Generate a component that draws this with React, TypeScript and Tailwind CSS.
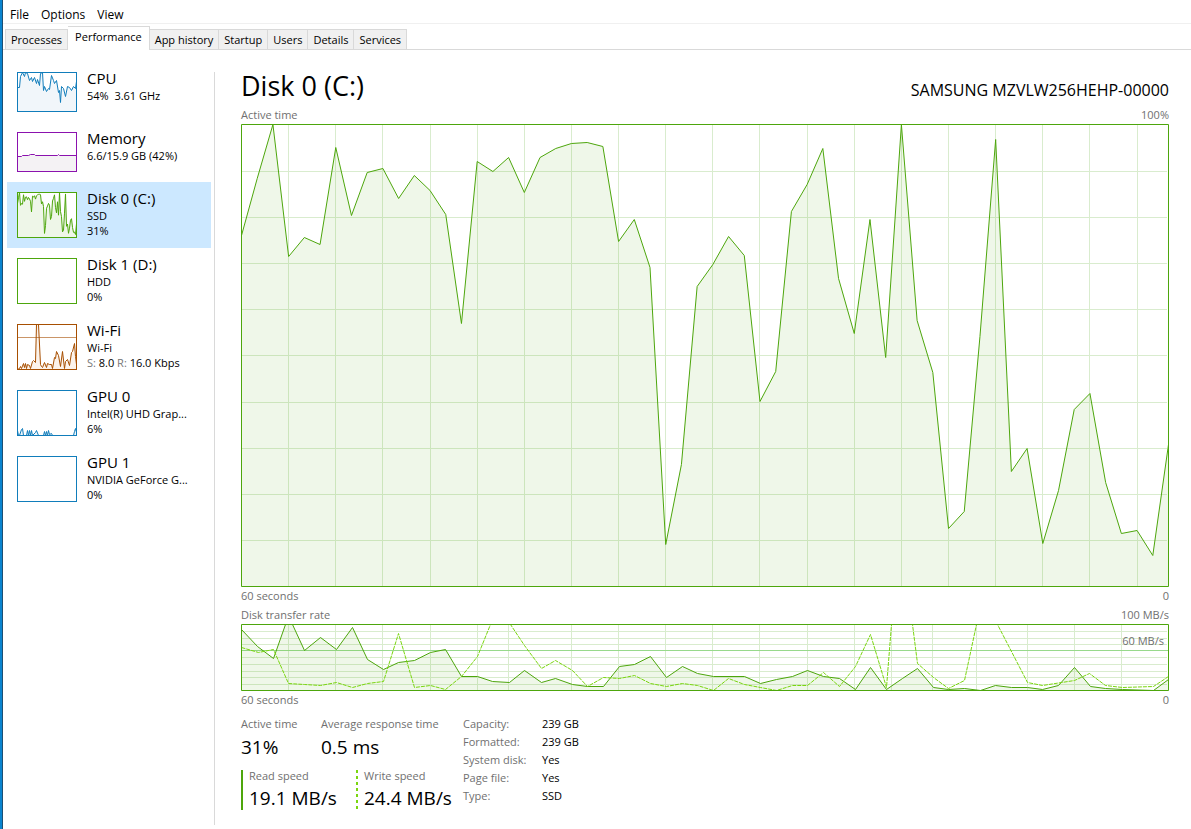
type Pt = [number, number];

const BLUE = "#117dbb";
const PURPLE = "#8b12ae";
const GREEN = "#4da60c";
const BROWN = "#a74f01";

// Active time, 60 samples, y in chart pixels from the top (462 = 0%)
const activeY = [
  111, 54, 0, 132, 113, 120, 23, 91, 48, 44, 74, 51, 66, 90, 199, 37, 47, 33, 68, 33,
  24, 19, 18, 22, 117, 95, 143, 420, 340, 162, 140, 112, 131, 277, 247, 87, 60, 24, 154, 209,
  95, 233, 0, 196, 248, 404, 387, 212, 15, 347, 324, 419, 366, 285, 269, 358, 409, 406, 431, 320,
];
const active: Pt[] = activeY.map((y, i) => [(i * 927) / 59, y]);
const disk0: Pt[] = activeY.map((y, i) => [i, (y * 45) / 462]);

const read: Pt[] = [
  [0, 5], [16, 22], [32, 34], [44, 0], [51, 0], [63, 26], [79, 13], [95, 25], [111, 3], [126, 35],
  [142, 45], [157, 38], [173, 36], [189, 28], [204, 25], [220, 52], [236, 52], [251, 57], [268, 58], [283, 46],
  [300, 58], [314, 54], [331, 60], [346, 62], [362, 62], [378, 42], [393, 40], [409, 32], [425, 53], [441, 42],
  [456, 49], [472, 52], [503, 52], [519, 59], [535, 55], [551, 52], [566, 46], [582, 52], [598, 54], [614, 65],
  [629, 43], [645, 65], [661, 54], [676, 44], [692, 63], [707, 65], [723, 64], [739, 66], [754, 61], [770, 63],
  [786, 63], [801, 65], [817, 61], [833, 43], [849, 62], [864, 64], [881, 65], [912, 66], [927, 55],
];

const write: Pt[] = [
  [0, 23], [17, 28], [32, 25], [47, 59], [63, 60], [79, 61], [95, 58], [111, 63], [126, 59], [142, 57],
  [157, 9], [173, 63], [189, 61], [204, 65], [220, 52], [236, 32], [249, 0], [269, 0], [283, 21], [300, 44],
  [314, 36], [331, 46], [346, 62], [362, 53], [378, 54], [393, 51], [409, 59], [425, 62], [441, 59], [456, 61],
  [472, 66], [487, 54], [503, 60], [519, 63], [535, 66], [551, 61], [566, 61], [582, 48], [598, 62], [614, 42],
  [629, 10], [645, 63], [650, 0], [671, 0], [676, 39], [692, 53], [707, 64], [723, 56], [735, 0], [756, 0],
  [786, 58], [801, 61], [833, 56], [848, 49], [864, 61], [881, 63], [912, 62], [927, 52],
];

const cpu: Pt[] = [
  [0, 15], [2, 15], [3, 4], [5, 0], [7, 4], [8, 0], [10, 1], [12, 8], [14, 5], [15, 9],
  [17, 5], [19, 11], [20, 7], [22, 13], [23, 1], [25, 0], [26, 18], [27, 14], [29, 19], [31, 16],
  [32, 17], [34, 3], [36, 8], [37, 11], [39, 8], [41, 20], [42, 18], [43, 30], [44, 14], [46, 16],
  [48, 24], [50, 14], [52, 15], [54, 18], [56, 14], [58, 16], [59, 9],
];

const memory: Pt[] = [[0, 24], [4, 24], [5, 23], [11, 23], [13, 22], [17, 22], [18, 23], [40, 23], [41, 22], [42, 23], [59, 23]];

const wifi: Pt[] = [
  [0, 45], [2, 44], [3, 42], [4, 44], [6, 39], [7, 43], [8, 39], [9, 44], [10, 40], [12, 41],
  [13, 44], [15, 37], [16, 36], [18, 38], [19, 0], [21, 0], [23, 40], [24, 42], [25, 43], [27, 38],
  [29, 43], [30, 39], [32, 40], [34, 40], [35, 44], [37, 33], [38, 34], [39, 27], [41, 31], [43, 42],
  [45, 27], [47, 44], [48, 37], [50, 35], [52, 41], [54, 28], [55, 27], [57, 19], [58, 32], [59, 40],
];

const gpu0: Pt[] = [
  [0, 40], [1, 45], [2, 45], [4, 39], [5, 38], [6, 45], [9, 45], [10, 40], [11, 45], [12, 40],
  [13, 45], [14, 40], [15, 45], [18, 42], [19, 40], [21, 45], [26, 45], [27, 41], [28, 45], [29, 41],
  [30, 45], [31, 40], [32, 44], [34, 43], [35, 45], [56, 45], [57, 41], [58, 38], [59, 42],
];

const toPoints = (pts: Pt[]) => pts.map(([x, y]) => `${x + 0.5},${y + 0.5}`).join(" ");

type ThumbProps = { color: string; fill?: string; height: number; data?: Pt[]; rule?: number };

function Thumb({ color, fill = "none", height, data, rule }: ThumbProps) {
  return (
    <svg width={60} height={height} className="shrink-0" aria-hidden="true">
      <rect x="0.5" y="0.5" width="59" height={height - 1} fill="#fff" />
      {data && (
        <>
          <polygon points={`0.5,${height} ${toPoints(data)} 59.5,${height}`} fill={fill} />
          <polyline points={toPoints(data)} fill="none" stroke={color} />
        </>
      )}
      {rule && <path d={`M0 ${rule + 0.5}H60`} stroke={color} strokeOpacity="0.6" />}
      <rect x="0.5" y="0.5" width="59" height={height - 1} fill="none" stroke={color} />
    </svg>
  );
}

type ChartProps = {
  label: string;
  height: number;
  columns: number[];
  data: Pt[];
  dashed?: Pt[];
  strongRow?: number;
  className: string;
};

function Chart({ label, height, columns, data, dashed, strongRow, className }: ChartProps) {
  // the strong row stands in for the grid row beside it
  const rows = Array.from({ length: 9 }, (_, i) => Math.ceil(((i + 1) * (height - 1)) / 10)).filter(
    (y) => !strongRow || Math.abs(y - strongRow) > 1,
  );
  return (
    <svg viewBox={`0 0 928 ${height}`} preserveAspectRatio="none" className={className} role="img" aria-label={label}>
      <g stroke="#d9ecce">
        {columns.map((x) => (
          <path key={x} d={`M${x + 0.5} 0V${height}`} vectorEffect="non-scaling-stroke" />
        ))}
        {rows.map((y) => (
          <path key={y} d={`M0 ${y + 0.5}H926`} vectorEffect="non-scaling-stroke" />
        ))}
      </g>
      {strongRow && <path d={`M0 ${strongRow + 0.5}H928`} stroke="#98d98c" vectorEffect="non-scaling-stroke" />}
      <polygon points={`0,${height} ${toPoints(data)} 928,${height}`} fill={GREEN} fillOpacity="0.09" />
      <polyline points={toPoints(data)} fill="none" stroke={GREEN} vectorEffect="non-scaling-stroke" />
      {dashed && (
        <polyline
          points={toPoints(dashed)}
          fill="none"
          stroke="#7ad610"
          strokeDasharray="4 1"
          vectorEffect="non-scaling-stroke"
        />
      )}
      <rect
        x="0.5"
        y="0.5"
        width="927"
        height={height - 1}
        fill="none"
        stroke={GREEN}
        vectorEffect="non-scaling-stroke"
      />
    </svg>
  );
}

const tabs = ["Processes", "Performance", "App history", "Startup", "Users", "Details", "Services"];

const devices = [
  { name: "CPU", lines: ["54%  3.61 GHz"], thumb: { color: BLUE, fill: "#f1f6fa", height: 40, data: cpu } },
  { name: "Memory", lines: ["6.6/15.9 GB (42%)"], thumb: { color: PURPLE, fill: "#f4f2f4", height: 40, data: memory } },
  { name: "Disk 0 (C:)", lines: ["SSD", "31%"], thumb: { color: GREEN, fill: "#eef6e8", height: 46, data: disk0 } },
  { name: "Disk 1 (D:)", lines: ["HDD", "0%"], thumb: { color: GREEN, height: 46 } },
  { name: "Wi-Fi", lines: ["Wi-Fi", "rate"], thumb: { color: BROWN, fill: "#fcf3eb", height: 46, data: wifi, rule: 13 } },
  { name: "GPU 0", lines: ["Intel(R) UHD Grap...", "6%"], thumb: { color: BLUE, fill: "#f1f6fa", height: 46, data: gpu0 } },
  { name: "GPU 1", lines: ["NVIDIA GeForce G...", "0%"], thumb: { color: BLUE, height: 46 } },
];

const details = [
  ["Capacity:", "239 GB"],
  ["Formatted:", "239 GB"],
  ["System disk:", "Yes"],
  ["Page file:", "Yes"],
  ["Type:", "SSD"],
];

const activeCols = [47, 94, 141, 189, 236, 283, 330, 377, 424, 471, 518, 566, 613, 660, 707, 754, 801, 848, 896];
const rateCols = [47, 94, 141, 189, 236, 267, 330, 377, 424, 471, 518, 566, 613, 650, 691, 735, 786, 833, 880];

export default function App() {
  return (
    <div className="flex min-h-screen flex-col border-l-2 border-[#0a84cf] bg-white font-['Open_Sans','Noto_Sans',sans-serif] text-[11px] text-black">
      <div className="flex flex-1 flex-col border-l border-[#1c4f73]">
        <nav className="flex h-6 items-center gap-3 border-b border-[#f0f0f0] pt-1.5 pl-[7px] text-xs">
          <button>File</button>
          <button>Options</button>
          <button>View</button>
        </nav>

        <div role="tablist" className="flex h-[26px] items-end border-b border-[#d9d9d9] pl-0.5">
          {tabs.map((tab) =>
            tab === "Performance" ? (
              <button
                key={tab}
                role="tab"
                aria-selected="true"
                className="-mb-px h-6 border border-b-0 border-l-0 border-[#d9d9d9] bg-white px-[7px] pb-0.5"
              >
                {tab}
              </button>
            ) : (
              <button
                key={tab}
                role="tab"
                aria-selected="false"
                className="h-5 border-t border-r border-[#d9d9d9] bg-[#f0f0f0] px-[5px] pt-px first:border-l"
              >
                {tab}
              </button>
            ),
          )}
        </div>

        <div className="flex flex-1">
          <aside className="mt-[22px] mb-1 w-[212px] shrink-0 border-r border-[#d9d9d9] pr-[3px] pl-1">
            {devices.map((d) => (
              <button
                key={d.name}
                className={`flex w-full items-start gap-2.5 pl-2.5 text-left ${d.lines.length > 1 ? "h-[66px]" : "h-[60px]"} ${
                  d.name === "Disk 0 (C:)" ? "-mt-2.5 mb-2.5 bg-[#cce8ff] pt-2.5" : ""
                }`}
              >
                <Thumb {...d.thumb} />
                <span className="flex flex-col leading-[15px] whitespace-pre">
                  <span className="mb-1 text-[15px] leading-3">{d.name}</span>
                  {d.lines.map((line) =>
                    line === "rate" ? (
                      <span key={line}>
                        <span className="text-[#767676]">S:</span> 8.0 <span className="text-[#767676]">R:</span> 16.0 Kbps
                      </span>
                    ) : (
                      <span key={line}>{line}</span>
                    ),
                  )}
                </span>
              </button>
            ))}
          </aside>

          <main className="min-w-0 flex-1 pt-5 pr-[22px] pl-[26px] text-[#707070]">
            <header className="flex items-end justify-between text-black">
              <h1 className="text-[27px] leading-8">Disk 0 (C:)</h1>
              <span className="text-base leading-6">SAMSUNG MZVLW256HEHP-00000</span>
            </header>

            <div className="mt-[5px] flex justify-between pb-px leading-4">
              <span>Active time</span>
              <span>100%</span>
            </div>
            <Chart label="Active time" height={463} columns={activeCols} data={active} className="block h-[463px] w-full" />
            <div className="flex justify-between pt-px leading-4">
              <span>60 seconds</span>
              <span>0</span>
            </div>

            <div className="mt-[3px] flex justify-between pb-px leading-4">
              <span>Disk transfer rate</span>
              <span>100 MB/s</span>
            </div>
            <div className="relative">
              <Chart
                label="Disk transfer rate"
                height={67}
                columns={rateCols}
                data={read}
                dashed={write}
                strongRow={26}
                className="block h-[67px] w-full"
              />
              <span className="absolute top-[9px] right-[5px] leading-4">60 MB/s</span>
            </div>
            <div className="flex justify-between pt-px leading-4">
              <span>60 seconds</span>
              <span>0</span>
            </div>

            <div className="mt-2 flex">
              <div className="w-[222px]">
                <div className="flex">
                  <div className="w-20">
                    <div className="leading-4">Active time</div>
                    <div className="mt-[3px] text-[19px] leading-6 text-black">31%</div>
                  </div>
                  <div className="whitespace-nowrap">
                    <div className="leading-4">Average response time</div>
                    <div className="mt-[3px] text-[19px] leading-6 text-black">0.5 ms</div>
                  </div>
                </div>
                <div className="mt-[11px] flex whitespace-nowrap">
                  <div className="h-10 w-[115px] border-l-2 border-[#4da60c] pl-1.5">
                    <div className="leading-3">Read speed</div>
                    <div className="mt-1 text-[19px] leading-6 text-black">19.1 MB/s</div>
                  </div>
                  <div className="flex h-10 gap-1.5">
                    <svg width="2" height="40" aria-hidden="true">
                      <path d="M1 0V40" stroke="#7ad610" strokeWidth="2" strokeDasharray="3 3" />
                    </svg>
                    <div>
                      <div className="leading-3">Write speed</div>
                      <div className="mt-1 text-[19px] leading-6 text-black">24.4 MB/s</div>
                    </div>
                  </div>
                </div>
              </div>
              <table className="-mt-px h-fit text-left leading-[18px]">
                <tbody>
                  {details.map(([name, value]) => (
                    <tr key={name}>
                      <th scope="row" className="w-[79px] p-0 font-normal">
                        {name}
                      </th>
                      <td className="p-0 text-black">{value}</td>
                    </tr>
                  ))}
                </tbody>
              </table>
            </div>
          </main>
        </div>
      </div>
    </div>
  );
}
